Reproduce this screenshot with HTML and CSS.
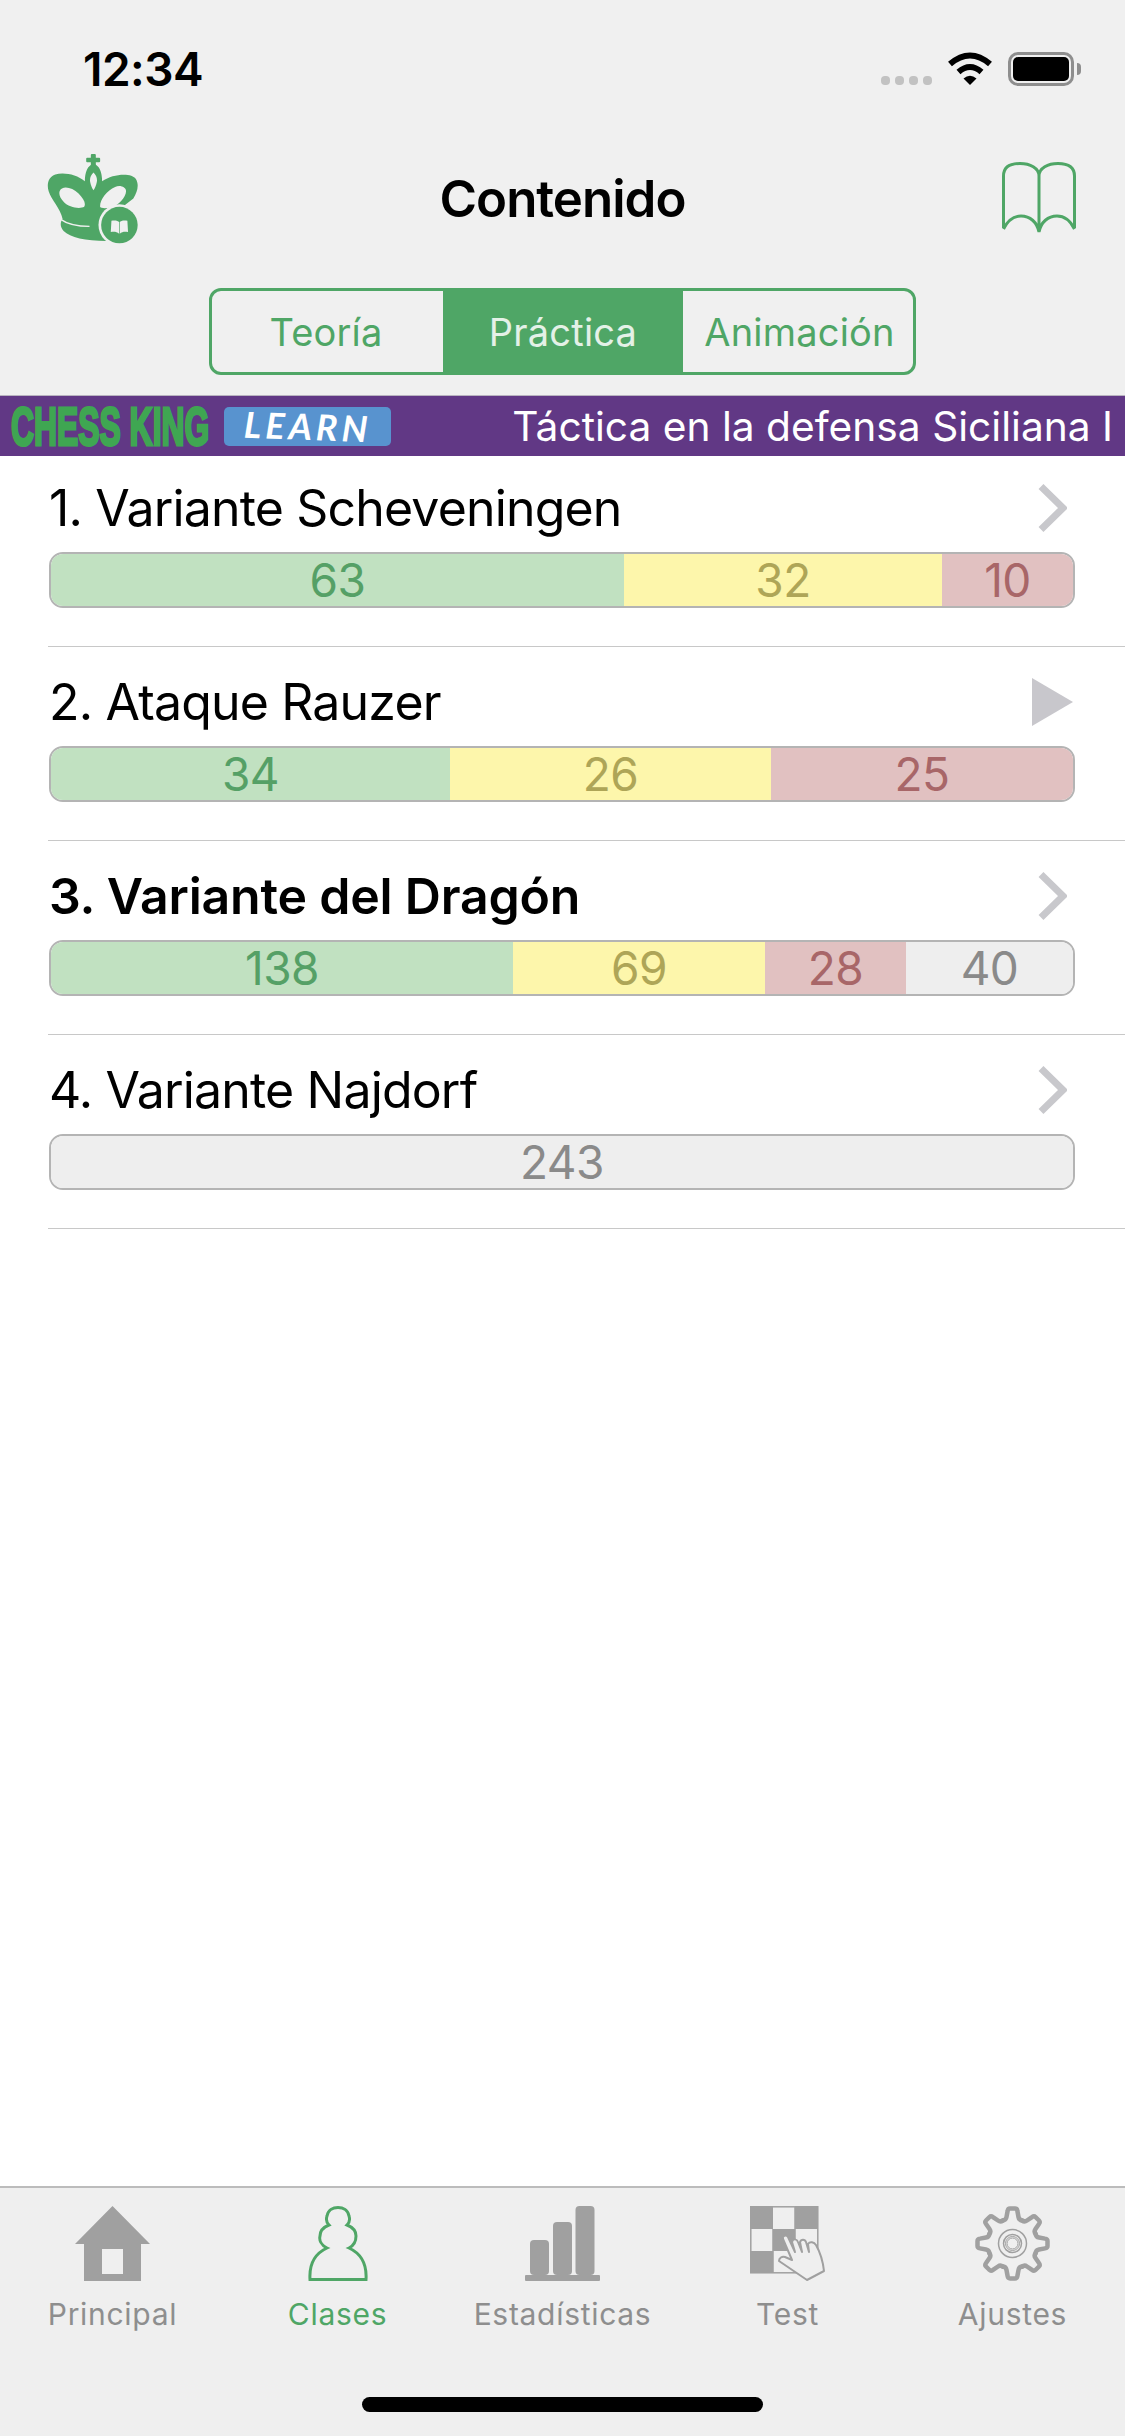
FILE: index.html
```html
<!DOCTYPE html>
<html lang="es">
<head>
    <meta charset="UTF-8">
    <meta name="viewport" content="width=device-width, initial-scale=1.0">
    <title>Contenido</title>
    <link rel="stylesheet" href="styles.css">
</head>
<body>
    <div class="page">
        <div class="status-bar">
            <span class="status-time">12:34</span>
            <div class="status-icons">
                <div class="signal-dots"><i></i><i></i><i></i><i></i></div>
                <svg class="wifi-icon" width="46" height="33" viewBox="0 0 46 33">
                    <path d="M3 12 Q23 -5 43 12" fill="none" stroke="#000" stroke-width="6"/>
                    <path d="M11.500 20 Q23 10 34.500 20" fill="none" stroke="#000" stroke-width="6"/>
                    <path d="M23 33 L16.500 26.500 Q23 21 29.500 26.500 Z" fill="#000"/>
                </svg>
                <div class="battery">
                    <div class="battery-body"><div class="battery-fill"></div></div>
                    <div class="battery-nub"></div>
                </div>
            </div>
        </div>

        <header class="nav-bar">
            <svg class="king-logo" width="93" height="93" viewBox="140 60 280 280">
                <rect x="272" y="66" width="15" height="44" rx="3" fill="#4fa666"/>
                <rect x="258" y="77" width="42" height="14" rx="3" fill="#4fa666"/>
                <path fill-rule="evenodd" fill="#4fa666" d="M280 95 C262 100 254 120 254 148 C230 128 190 120 165 128 C145 135 138 155 145 178 C153 205 180 228 187 262 C180 270 178 285 190 298 C210 318 255 328 320 328 L330 260 L372 222 L400 200 C412 180 418 160 408 142 C395 122 340 125 306 148 C306 120 298 100 280 95 Z M178 178 C185 160 215 165 235 185 C250 200 258 215 252 225 C240 232 205 228 190 210 C180 198 175 188 178 178 Z M300 225 C298 205 320 175 345 165 C360 158 378 165 378 178 C378 195 355 222 330 228 C315 230 302 230 300 225 Z M280 122 C288 130 292 140 290 150 C288 160 284 170 280 175 C276 170 272 160 270 150 C268 140 272 130 280 122 Z"/>
                <path d="M180 262 C205 280 240 284 268 284" fill="none" stroke="#f0f0f0" stroke-width="4"/>
                <circle cx="358" cy="280" r="63" fill="#f0f0f0"/>
                <circle cx="358" cy="280" r="55" fill="#4fa666"/>
                <path d="M334 267 C345 265 354 267 357 271 V306 C350 300 342 299 332 301 Z M382 267 C371 265 362 267 359 271 V306 C366 300 374 299 384 301 Z" fill="#f0f0f0"/>
            </svg>
            <h1 class="nav-title">Contenido</h1>
            <svg class="book-icon" width="74" height="72" viewBox="0 0 74 72">
                <path d="M1.500 66 V14 C1.500 5 8 1.500 18 1.500 C28 1.500 37 6 37 14 C37 6 46 1.500 56 1.500 C66 1.500 72.500 5 72.500 14 V66 M37 14 V70 M1.500 67 C6 58 12 54 19 54 C28 54 35 60 37 70 C39 60 46 54 55 54 C62 54 68 58 72.500 67" fill="none" stroke="#4fa666" stroke-width="3"/>
            </svg>
        </header>

        <div class="segment-wrap">
            <div class="segment">
                <div class="segment-item segment-first">Teoría</div>
                <div class="segment-item segment-second active">Práctica</div>
                <div class="segment-item segment-third">Animación</div>
            </div>
        </div>

        <div class="banner">
            <div class="brand">
                <div class="brand-box"><span class="brand-name">CHESS KING</span></div>
                <div class="brand-learn"><span>LEARN</span></div>
            </div>
            <div class="banner-title">Táctica en la defensa Siciliana I</div>
        </div>

        <main class="chapter-list">
            <section class="chapter chapter-first">
                <div class="chapter-head">
                    <h2 class="chapter-title">1. Variante Scheveningen</h2>
                    <svg class="chevron" width="29" height="48" viewBox="0 0 29 48"><path d="M3 2.500 L25 24 L3 45.500" fill="none" stroke="#c8c8cc" stroke-width="7"/></svg>
                </div>
                <div class="progress">
                    <div class="progress-part part-green" style="width: 573px">63</div>
                    <div class="progress-part part-yellow" style="width: 318px">32</div>
                    <div class="progress-part part-red" style="flex: 1">10</div>
                </div>
            </section>

            <section class="chapter">
                <div class="chapter-head">
                    <h2 class="chapter-title">2. Ataque Rauzer</h2>
                    <svg class="play" width="41" height="48" viewBox="0 0 41 48"><path d="M0 0 L41 24 L0 48 Z" fill="#c8c7cc"/></svg>
                </div>
                <div class="progress">
                    <div class="progress-part part-green" style="width: 399px">34</div>
                    <div class="progress-part part-yellow" style="width: 321px">26</div>
                    <div class="progress-part part-red" style="flex: 1">25</div>
                </div>
            </section>

            <section class="chapter">
                <div class="chapter-head">
                    <h2 class="chapter-title chapter-current">3. Variante del Dragón</h2>
                    <svg class="chevron" width="29" height="48" viewBox="0 0 29 48"><path d="M3 2.500 L25 24 L3 45.500" fill="none" stroke="#c8c8cc" stroke-width="7"/></svg>
                </div>
                <div class="progress">
                    <div class="progress-part part-green" style="width: 462px">138</div>
                    <div class="progress-part part-yellow" style="width: 252px">69</div>
                    <div class="progress-part part-red" style="width: 141px">28</div>
                    <div class="progress-part part-gray" style="flex: 1">40</div>
                </div>
            </section>

            <section class="chapter">
                <div class="chapter-head">
                    <h2 class="chapter-title">4. Variante Najdorf</h2>
                    <svg class="chevron" width="29" height="48" viewBox="0 0 29 48"><path d="M3 2.500 L25 24 L3 45.500" fill="none" stroke="#c8c8cc" stroke-width="7"/></svg>
                </div>
                <div class="progress">
                    <div class="progress-part part-gray" style="flex: 1">243</div>
                </div>
            </section>
        </main>

        <footer class="tab-bar">
            <nav class="tabs">
                <div class="tab">
                    <svg class="tab-icon" width="75" height="75" viewBox="0 0 75 75">
                        <path fill-rule="evenodd" fill="#a0a0a0" d="M37.500 0 L75 38 H66 V75 H9 V38 H0 Z M27 43 V68 H48 V43 Z"/>
                    </svg>
                    <span class="tab-label">Principal</span>
                </div>
                <div class="tab tab-active">
                    <svg class="tab-icon" width="60" height="75" viewBox="0 0 60 75">
                        <path d="M2 73.500 C1 58 6 48 19 42 C13 39 11 34 12 30 C12 25 16 21 21 19 C18 16 18 13 19 10 C20 4 25 1.500 30 1.500 C35 1.500 40 4 41 10 C42 13 42 16 39 19 C44 21 48 25 48 30 C48 34 47 39 41 42 C54 48 59 58 58 73.500 Z" fill="none" stroke="#4fa666" stroke-width="3"/>
                    </svg>
                    <span class="tab-label">Clases</span>
                </div>
                <div class="tab">
                    <svg class="tab-icon" width="75" height="75" viewBox="0 0 75 75">
                        <g fill="#a0a0a0">
                            <rect x="5" y="34" width="19" height="35" rx="4"/>
                            <rect x="28" y="16" width="19" height="53" rx="4"/>
                            <rect x="50.500" y="0" width="19" height="69" rx="4"/>
                            <rect x="0" y="69" width="75" height="6" rx="1"/>
                        </g>
                    </svg>
                    <span class="tab-label">Estadísticas</span>
                </div>
                <div class="tab">
                    <svg class="tab-icon" width="75" height="75" viewBox="0 0 75 75">
                        <rect x="0.800" y="0.800" width="67" height="66" fill="none" stroke="#a0a0a0" stroke-width="1.500"/>
                        <g fill="#a0a0a0">
                            <rect x="0" y="0" width="23" height="23"/>
                            <rect x="45" y="0" width="23" height="23"/>
                            <rect x="23" y="23" width="22" height="22"/>
                            <rect x="0" y="45" width="23" height="22"/>
                        </g>
                        <path d="M23 23 V67 M45 1 V46" fill="none" stroke="#a0a0a0" stroke-width="1.500"/>
                        <path d="M29 55 C29 52 32 50 35 51 L42 54 L33 33 C32 30 36 28 38 31 L45 46 L42 36 C43 32 47 33 48 36 L52 46 L50 36 C51 33 55 33 56 36 L59 46 L58 38 C60 35 64 36 66 39 C70 46 73 56 74 65 L57 74 Z" fill="#efefef" stroke="#a0a0a0" stroke-width="2" stroke-linejoin="round"/>
                    </svg>
                    <span class="tab-label">Test</span>
                </div>
                <div class="tab">
                    <svg class="tab-icon" width="75" height="75" viewBox="0 0 75 75">
                        <defs>
                            <path id="gear-tooth" d="M27.900 14.400 Q31 14 31.500 11 L32.600 5 Q33 2.500 35 2.500 H40 Q42 2.500 42.400 5 L43.500 11 Q44 14 47.100 14.400"/>
                        </defs>
                        <g fill="none" stroke="#a0a0a0" stroke-width="4.500" stroke-linecap="round">
                            <use href="#gear-tooth"/>
                            <use href="#gear-tooth" transform="rotate(45 37.500 37.500)"/>
                            <use href="#gear-tooth" transform="rotate(90 37.500 37.500)"/>
                            <use href="#gear-tooth" transform="rotate(135 37.500 37.500)"/>
                            <use href="#gear-tooth" transform="rotate(180 37.500 37.500)"/>
                            <use href="#gear-tooth" transform="rotate(225 37.500 37.500)"/>
                            <use href="#gear-tooth" transform="rotate(270 37.500 37.500)"/>
                            <use href="#gear-tooth" transform="rotate(315 37.500 37.500)"/>
                        </g>
                        <g fill="none" stroke="#a0a0a0">
                            <circle cx="37.500" cy="37.500" r="14" stroke-width="1.500"/>
                            <circle cx="37.500" cy="37.500" r="9" stroke-width="1.500"/>
                            <circle cx="37.500" cy="37.500" r="7" stroke-width="1"/>
                            <circle cx="37.500" cy="37.500" r="5.500" stroke-width="1"/>
                        </g>
                    </svg>
                    <span class="tab-label">Ajustes</span>
                </div>
            </nav>
            <div class="home-indicator"></div>
        </footer>
    </div>
</body>
</html>
```

FILE: styles.css
```css
body {
    font-family: 'Inter', 'Liberation Sans', sans-serif;
    margin: 0;
    padding: 0;
    background-color: #fff;
}

.page {
    width: 1125px;
    height: 2436px;
    display: flex;
    flex-direction: column;
    overflow: hidden;
}

/* status bar */
.status-bar {
    height: 138px;
    box-sizing: border-box;
    padding: 0 44px 0 83px;
    display: flex;
    justify-content: space-between;
    align-items: center;
    background-color: #f0f0f0;
}

.status-time {
    font-size: 46px;
    font-weight: 600;
    letter-spacing: -0.5px;
    color: #000;
}

.status-icons {
    display: flex;
    align-items: flex-end;
}

.signal-dots {
    display: flex;
    gap: 5px;
    margin-right: 15px;
    margin-bottom: 1px;
}

.signal-dots i {
    display: block;
    width: 9px;
    height: 9px;
    border-radius: 4px;
    background-color: #c2c2c2;
}

.wifi-icon {
    margin-right: 15px;
    margin-bottom: 1px;
}

.battery {
    display: flex;
    align-items: center;
}

.battery-body {
    width: 66px;
    height: 34px;
    box-sizing: border-box;
    padding: 2px;
    border: 3px solid #8e8e8e;
    border-radius: 10px;
}

.battery-fill {
    height: 100%;
    border-radius: 5px;
    background-color: #000;
}

.battery-nub {
    width: 4px;
    height: 12px;
    margin-left: 3px;
    border-radius: 0 4px 4px 0;
    background-color: #8e8e8e;
}

/* nav */
.nav-bar {
    height: 120px;
    box-sizing: border-box;
    padding: 0 49px 0 47px;
    display: flex;
    justify-content: space-between;
    align-items: center;
    position: relative;
    background-color: #f0f0f0;
}

.nav-title {
    margin: 0;
    position: absolute;
    left: 0;
    right: 0;
    text-align: center;
    font-size: 51px;
    font-weight: 600;
    letter-spacing: -1px;
    color: #000;
}

.king-logo {
    position: relative;
    z-index: 1;
}

.segment-wrap {
    height: 137px;
    box-sizing: border-box;
    padding-top: 30px;
    display: flex;
    justify-content: center;
    background-color: #f0f0f0;
}

.segment {
    width: 707px;
    height: 87px;
    box-sizing: border-box;
    display: flex;
    border: 3px solid #4fa666;
    border-radius: 12px;
    overflow: hidden;
}

.segment-item {
    display: flex;
    align-items: center;
    justify-content: center;
    box-sizing: border-box;
    font-size: 38px;
    letter-spacing: 0.2px;
    color: #4fa666;
}

.segment-first {
    width: 231px;
    padding-right: 3px;
}

.segment-second {
    width: 240px;
}

.segment-third {
    flex: 1;
    padding-left: 3px;
}

.segment-item.active {
    background-color: #4fa666;
    color: #e4f1e7;
}

/* banner */
.banner {
    height: 61px;
    box-sizing: border-box;
    padding-right: 12px;
    display: flex;
    justify-content: space-between;
    align-items: center;
    border-top: 1px solid #b9b4c0;
    background-color: #613885;
}

.brand {
    display: flex;
    align-items: center;
    padding-left: 11px;
}

.brand-box {
    width: 213px;
    height: 39px;
    display: flex;
    align-items: center;
}

.brand-name {
    display: block;
    font-family: 'Liberation Sans', sans-serif;
    font-size: 54px;
    line-height: 39px;
    font-weight: 700;
    white-space: nowrap;
    color: #3fa652;
    -webkit-text-stroke: 3px #3fa652;
    transform: scaleX(0.59);
    transform-origin: left center;
}

.brand-learn {
    width: 167px;
    height: 39px;
    display: flex;
    align-items: center;
    justify-content: center;
    border-radius: 5px;
    background-color: #5893cf;
}

.brand-learn span {
    font-family: 'Lato', sans-serif;
    font-style: italic;
    font-weight: 700;
    font-size: 36px;
    letter-spacing: 4px;
    color: #fff;
    transform: rotate(2deg);
}

.banner-title {
    font-size: 40.7px;
    color: #fff;
}

/* chapters */
.chapter-list {
    flex: 1;
    background-color: #fff;
}

.chapter {
    margin-left: 48px;
    padding: 25px 50px 38px 1px;
    border-bottom: 1px solid #c8c8c8;
}

.chapter-first {
    padding-top: 22px;
}

.chapter-head {
    height: 60px;
    margin-bottom: 14px;
    display: flex;
    justify-content: space-between;
    align-items: center;
}

.chapter-title {
    margin: 0;
    font-size: 50px;
    font-weight: 400;
    letter-spacing: -0.83px;
    color: #000;
}

.chapter-current {
    font-weight: 600;
    letter-spacing: -0.2px;
}

.chevron {
    margin-right: 8px;
}

.play {
    margin-right: 2px;
}

.progress {
    height: 56px;
    box-sizing: border-box;
    display: flex;
    border: 2px solid #b4b4b4;
    border-radius: 14px;
    overflow: hidden;
}

.progress-part {
    display: flex;
    align-items: center;
    justify-content: center;
    font-size: 46px;
    letter-spacing: -0.5px;
    line-height: 52px;
}

.part-green {
    background-color: #c1e1c1;
    color: #55a066;
}

.part-yellow {
    background-color: #fdf6ab;
    color: #aea557;
}

.part-red {
    background-color: #e1c1c1;
    color: #a86668;
}

.part-gray {
    background-color: #eeeeee;
    color: #8a8a8a;
}

/* tabs */
.tab-bar {
    height: 250px;
    box-sizing: border-box;
    border-top: 2px solid #bcbcbc;
    padding-top: 18px;
    background-color: #efefef;
}

.tabs {
    display: grid;
    grid-template-columns: repeat(5, 1fr);
}

.tab {
    display: flex;
    flex-direction: column;
    align-items: center;
}

.tab-label {
    margin-top: 13px;
    font-size: 30px;
    letter-spacing: 0.7px;
    line-height: 40px;
    color: #8e8e8e;
}

.tab-active .tab-label {
    color: #4fa666;
}

.home-indicator {
    width: 401px;
    height: 15px;
    margin: 63px auto 0;
    border-radius: 8px;
    background-color: #000;
}
```
